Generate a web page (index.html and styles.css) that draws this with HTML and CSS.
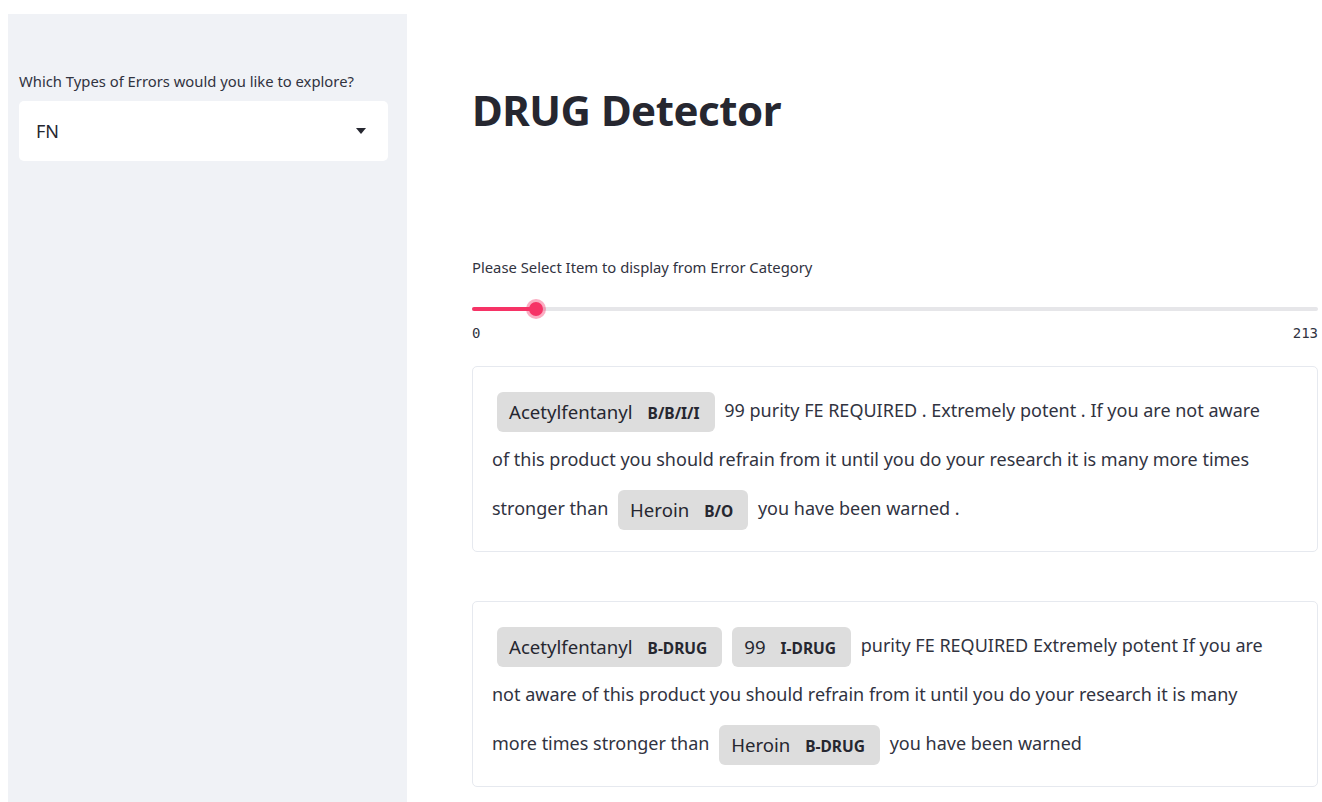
FILE: index.html
```html
<!DOCTYPE html>
<html lang="en">
<head>
<meta charset="utf-8">
<title>DRUG Detector</title>
<link rel="stylesheet" href="styles.css">
</head>
<body>
<div class="app">
  <aside class="sidebar">
    <label class="field-label">Which Types of Errors would you like to explore?</label>
    <div class="select">
      <span class="select-value">FN</span>
      <svg class="caret" width="10" height="6" viewBox="0 0 10 6"><path d="M0 0h10L5 6z" fill="#262730"/></svg>
    </div>
  </aside>

  <main class="main">
    <h1 class="title">DRUG Detector</h1>

    <div class="slider-block">
      <div class="field-label">Please Select Item to display from Error Category</div>
      <div class="slider">
        <div class="track">
          <div class="track-fill" style="width: 64px"></div>
          <div class="thumb" style="left: 64px"></div>
        </div>
      </div>
      <div class="slider-range">
        <span>0</span>
        <span>213</span>
      </div>
    </div>

    <div class="ents">
      <mark class="ent"><span class="ent-text">Acetylfentanyl</span><span class="ent-label">B/B/I/I</span></mark> 99 purity FE REQUIRED . Extremely potent . If you are not aware of this product you should refrain from it until you do your research it is many more times stronger than <mark class="ent"><span class="ent-text">Heroin</span><span class="ent-label">B/O</span></mark> you have been warned .
    </div>

    <div class="ents">
      <mark class="ent"><span class="ent-text">Acetylfentanyl</span><span class="ent-label">B-DRUG</span></mark><mark class="ent"><span class="ent-text">99</span><span class="ent-label">I-DRUG</span></mark> purity FE REQUIRED Extremely potent If you are not aware of this product you should refrain from it until you do your research it is many more times stronger than <mark class="ent"><span class="ent-text">Heroin</span><span class="ent-label">B-DRUG</span></mark> you have been warned
    </div>
  </main>
</div>
</body>
</html>
```

FILE: styles.css
```css
html, body {
  margin: 0;
  padding: 0;
  background: #ffffff;
}

body {
  padding: 14px 0 0 8px;
  font-family: "Noto Sans", "Open Sans", sans-serif;
  color: #262730;
  overflow: hidden;
}

.app {
  display: flex;
  height: 788px;
}

/* Sidebar */
.sidebar {
  width: 399px;
  flex: none;
  background: #f0f2f6;
  padding: 58px 19px 0 11px;
  box-sizing: border-box;
}

.field-label {
  display: block;
  font-size: 14.8px;
  line-height: 18px;
  color: #31333f;
}

.select {
  margin-top: 11px;
  height: 60px;
  background: #ffffff;
  border-radius: 5px;
  display: flex;
  align-items: center;
  justify-content: space-between;
  padding: 0 22px 0 17px;
}

.select-value {
  font-size: 18px;
}

.caret {
  display: block;
}

/* Main column */
.main {
  flex: 1;
  padding: 0 4px 0 65px;
  min-width: 0;
}

.title {
  margin: 64px 0 0;
  font-size: 42px;
  line-height: 64px;
  font-weight: 700;
  letter-spacing: -0.5px;
  color: #262730;
}

.slider-block {
  margin-top: 116px;
}

.slider {
  padding: 27px 0 0;
  height: 37px;
  box-sizing: border-box;
}

.track {
  position: relative;
  height: 4px;
  border-radius: 2px;
  background: #e6e6e9;
  margin-top: 4px;
}

.track-fill {
  position: absolute;
  left: 0;
  top: 0;
  height: 4px;
  border-radius: 2px;
  background: #f63366;
}

.thumb {
  position: absolute;
  top: 2px;
  width: 14px;
  height: 14px;
  margin: -7px 0 0 -7px;
  border-radius: 50%;
  background: #f63366;
  box-shadow: 0 0 0 3px rgba(246, 51, 102, 0.4);
}

.slider-range {
  display: flex;
  justify-content: space-between;
  margin-top: 12px;
  font-family: "DejaVu Sans Mono", "Liberation Mono", monospace;
  font-size: 14px;
  line-height: 16px;
  color: #31333f;
}

/* Entity cards */
.ents {
  margin-top: 25px;
  border: 1px solid #e6e9ef;
  border-radius: 5px;
  padding: 19px 40px 18px 19px;
  font-size: 18px;
  line-height: 49px;
  color: #31333f;
}

.ents + .ents {
  margin-top: 49px;
}

.ent {
  display: inline-flex;
  align-items: center;
  gap: 15px;
  height: 40px;
  padding: 0 15px 0 12px;
  margin: 0 5px;
  border-radius: 6px;
  background: #dddddd;
  color: #262730;
  vertical-align: middle;
  box-sizing: border-box;
}

.ent-text {
  font-size: 18.6px;
  line-height: 24px;
}

.ent-label {
  font-size: 15.5px;
  line-height: 20px;
  font-weight: 700;
  text-transform: uppercase;
  padding-top: 1px;
}
```
